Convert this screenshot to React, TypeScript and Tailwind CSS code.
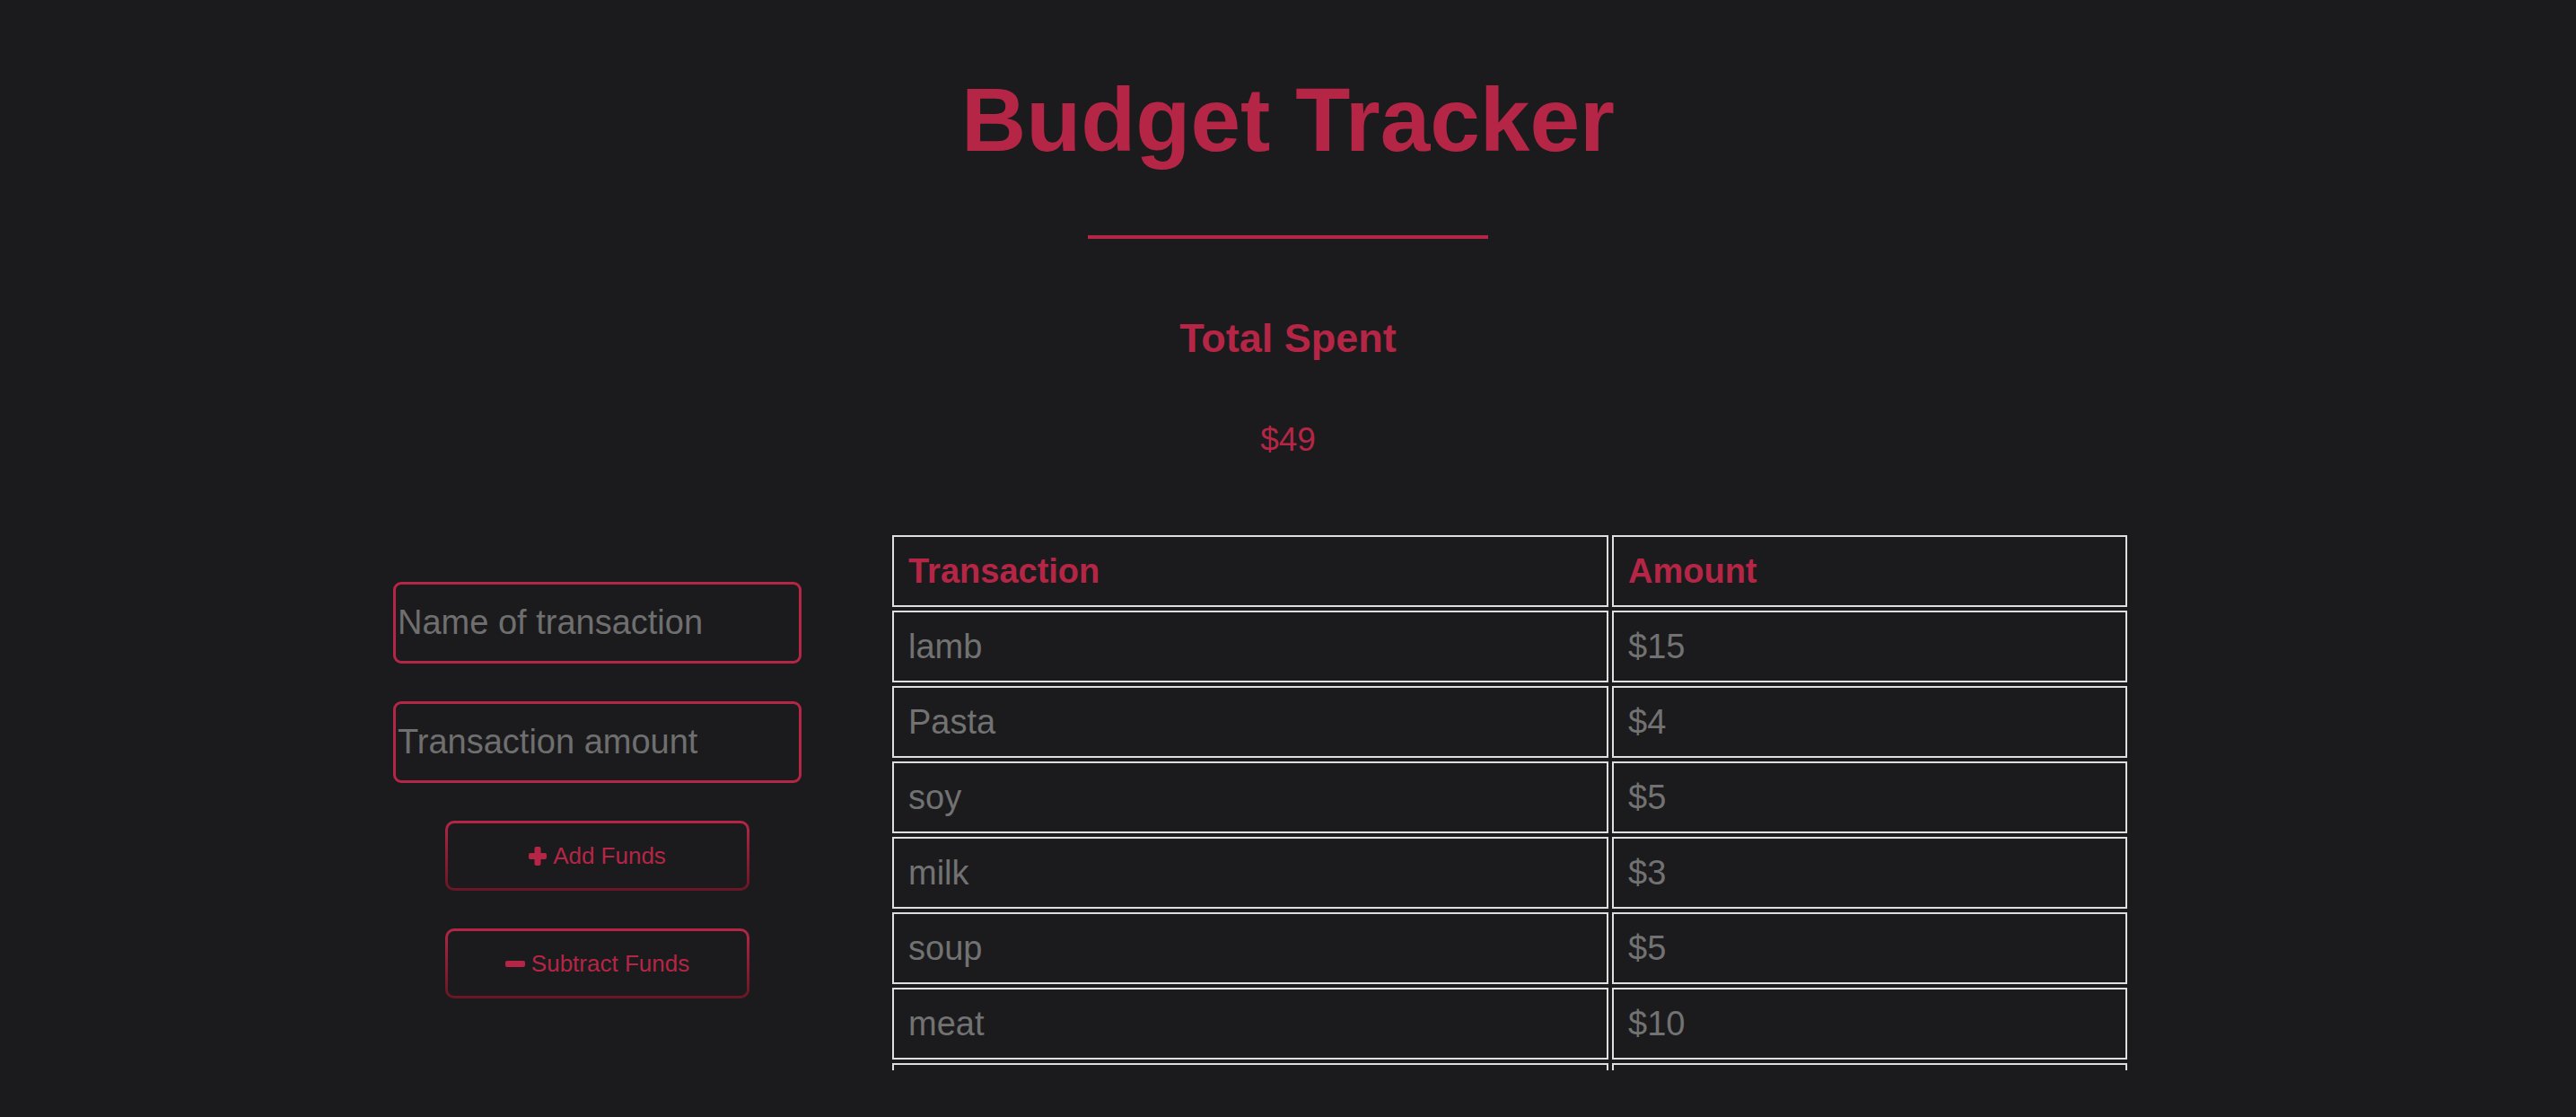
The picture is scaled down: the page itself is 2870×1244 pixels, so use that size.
import { useState } from 'react';

const rows = [
  { name: 'lamb', amount: 15 },
  { name: 'Pasta', amount: 4 },
  { name: 'soy', amount: 5 },
  { name: 'milk', amount: 3 },
  { name: 'soup', amount: 5 },
  { name: 'meat', amount: 10 },
  { name: 'bread', amount: 7 },
];

function PlusIcon() {
  return (
    <svg width="20" height="21" viewBox="0 0 20 21" className="shrink-0">
      <rect x="6.5" y="0" width="7" height="21" rx="2" fill="currentColor" />
      <rect x="0" y="7" width="20" height="7" rx="2" fill="currentColor" />
    </svg>
  );
}

function MinusIcon() {
  return (
    <svg width="22" height="7" viewBox="0 0 22 7" className="shrink-0">
      <rect x="0" y="0" width="22" height="7" rx="2" fill="currentColor" />
    </svg>
  );
}

function FundsButton({ label, icon }: { label: string; icon: React.ReactNode }) {
  return (
    <button className="w-[339px] h-[78px] rounded-[10px] p-[3px] bg-gradient-to-b from-[#b52646] to-[#6a1527] cursor-pointer">
      <span className="flex h-full w-full items-center justify-center gap-[7px] rounded-[7px] bg-[#1b1b1d] text-[26px] leading-none text-[#b52646]">
        {icon}
        {label}
      </span>
    </button>
  );
}

export default function App() {
  const [name, setName] = useState('');
  const [amount, setAmount] = useState('');
  const total = rows.reduce((s, r) => s + r.amount, 0);

  return (
    <div className="min-h-screen bg-[#1b1b1d] font-['Liberation_Sans',Arial,sans-serif] text-[#b52646]">
      {/* Header */}
      <h1 className="pt-[83px] text-center text-[100px] font-bold leading-none">Budget Tracker</h1>
      <div className="mx-auto mt-[79px] h-[4px] w-[446px] bg-[#b52646]"></div>

      <h3 className="mt-[88px] text-center text-[45px] font-bold leading-none">Total Spent</h3>
      <p className="mt-[72px] text-center text-[37px] leading-none">${total}</p>

      {/* Form + table */}
      <div className="mt-[84px] flex items-start gap-[97px] pl-[438px]">
        <div className="flex w-[455px] flex-col items-center gap-[42px] pt-[56px]">
          <input
            type="text"
            value={name}
            onChange={(e) => setName(e.target.value)}
            placeholder="Name of transaction"
            className="h-[91px] w-[455px] rounded-[9px] border-[3px] border-[#b52646] bg-transparent px-[2px] text-[38px] text-[#6f6f6f] outline-none placeholder:text-[#6f6f6f]"
          />
          <input
            type="number"
            value={amount}
            onChange={(e) => setAmount(e.target.value)}
            placeholder="Transaction amount"
            className="h-[91px] w-[455px] rounded-[9px] border-[3px] border-[#b52646] bg-transparent px-[2px] text-[38px] text-[#6f6f6f] outline-none placeholder:text-[#6f6f6f]"
          />
          <FundsButton label="Add Funds" icon={<PlusIcon />} />
          <FundsButton label="Subtract Funds" icon={<MinusIcon />} />
        </div>

        <div className="h-[600px] w-[1384px] overflow-hidden">
          <table className="w-[1384px] table-fixed border-separate border-spacing-1 text-left text-[38px] leading-[44px]">
            <thead>
              <tr>
                <th className="w-[798px] border-2 border-[#dedede] p-4 font-bold text-[#b52646]">Transaction</th>
                <th className="w-[574px] border-2 border-[#dedede] p-4 font-bold text-[#b52646]">Amount</th>
              </tr>
            </thead>
            <tbody>
              {rows.map((r) => (
                <tr key={r.name}>
                  <td className="border-2 border-[#dedede] p-4 text-[#727272]">{r.name}</td>
                  <td className="border-2 border-[#dedede] p-4 text-[#727272]">${r.amount}</td>
                </tr>
              ))}
            </tbody>
          </table>
        </div>
      </div>
    </div>
  );
}
